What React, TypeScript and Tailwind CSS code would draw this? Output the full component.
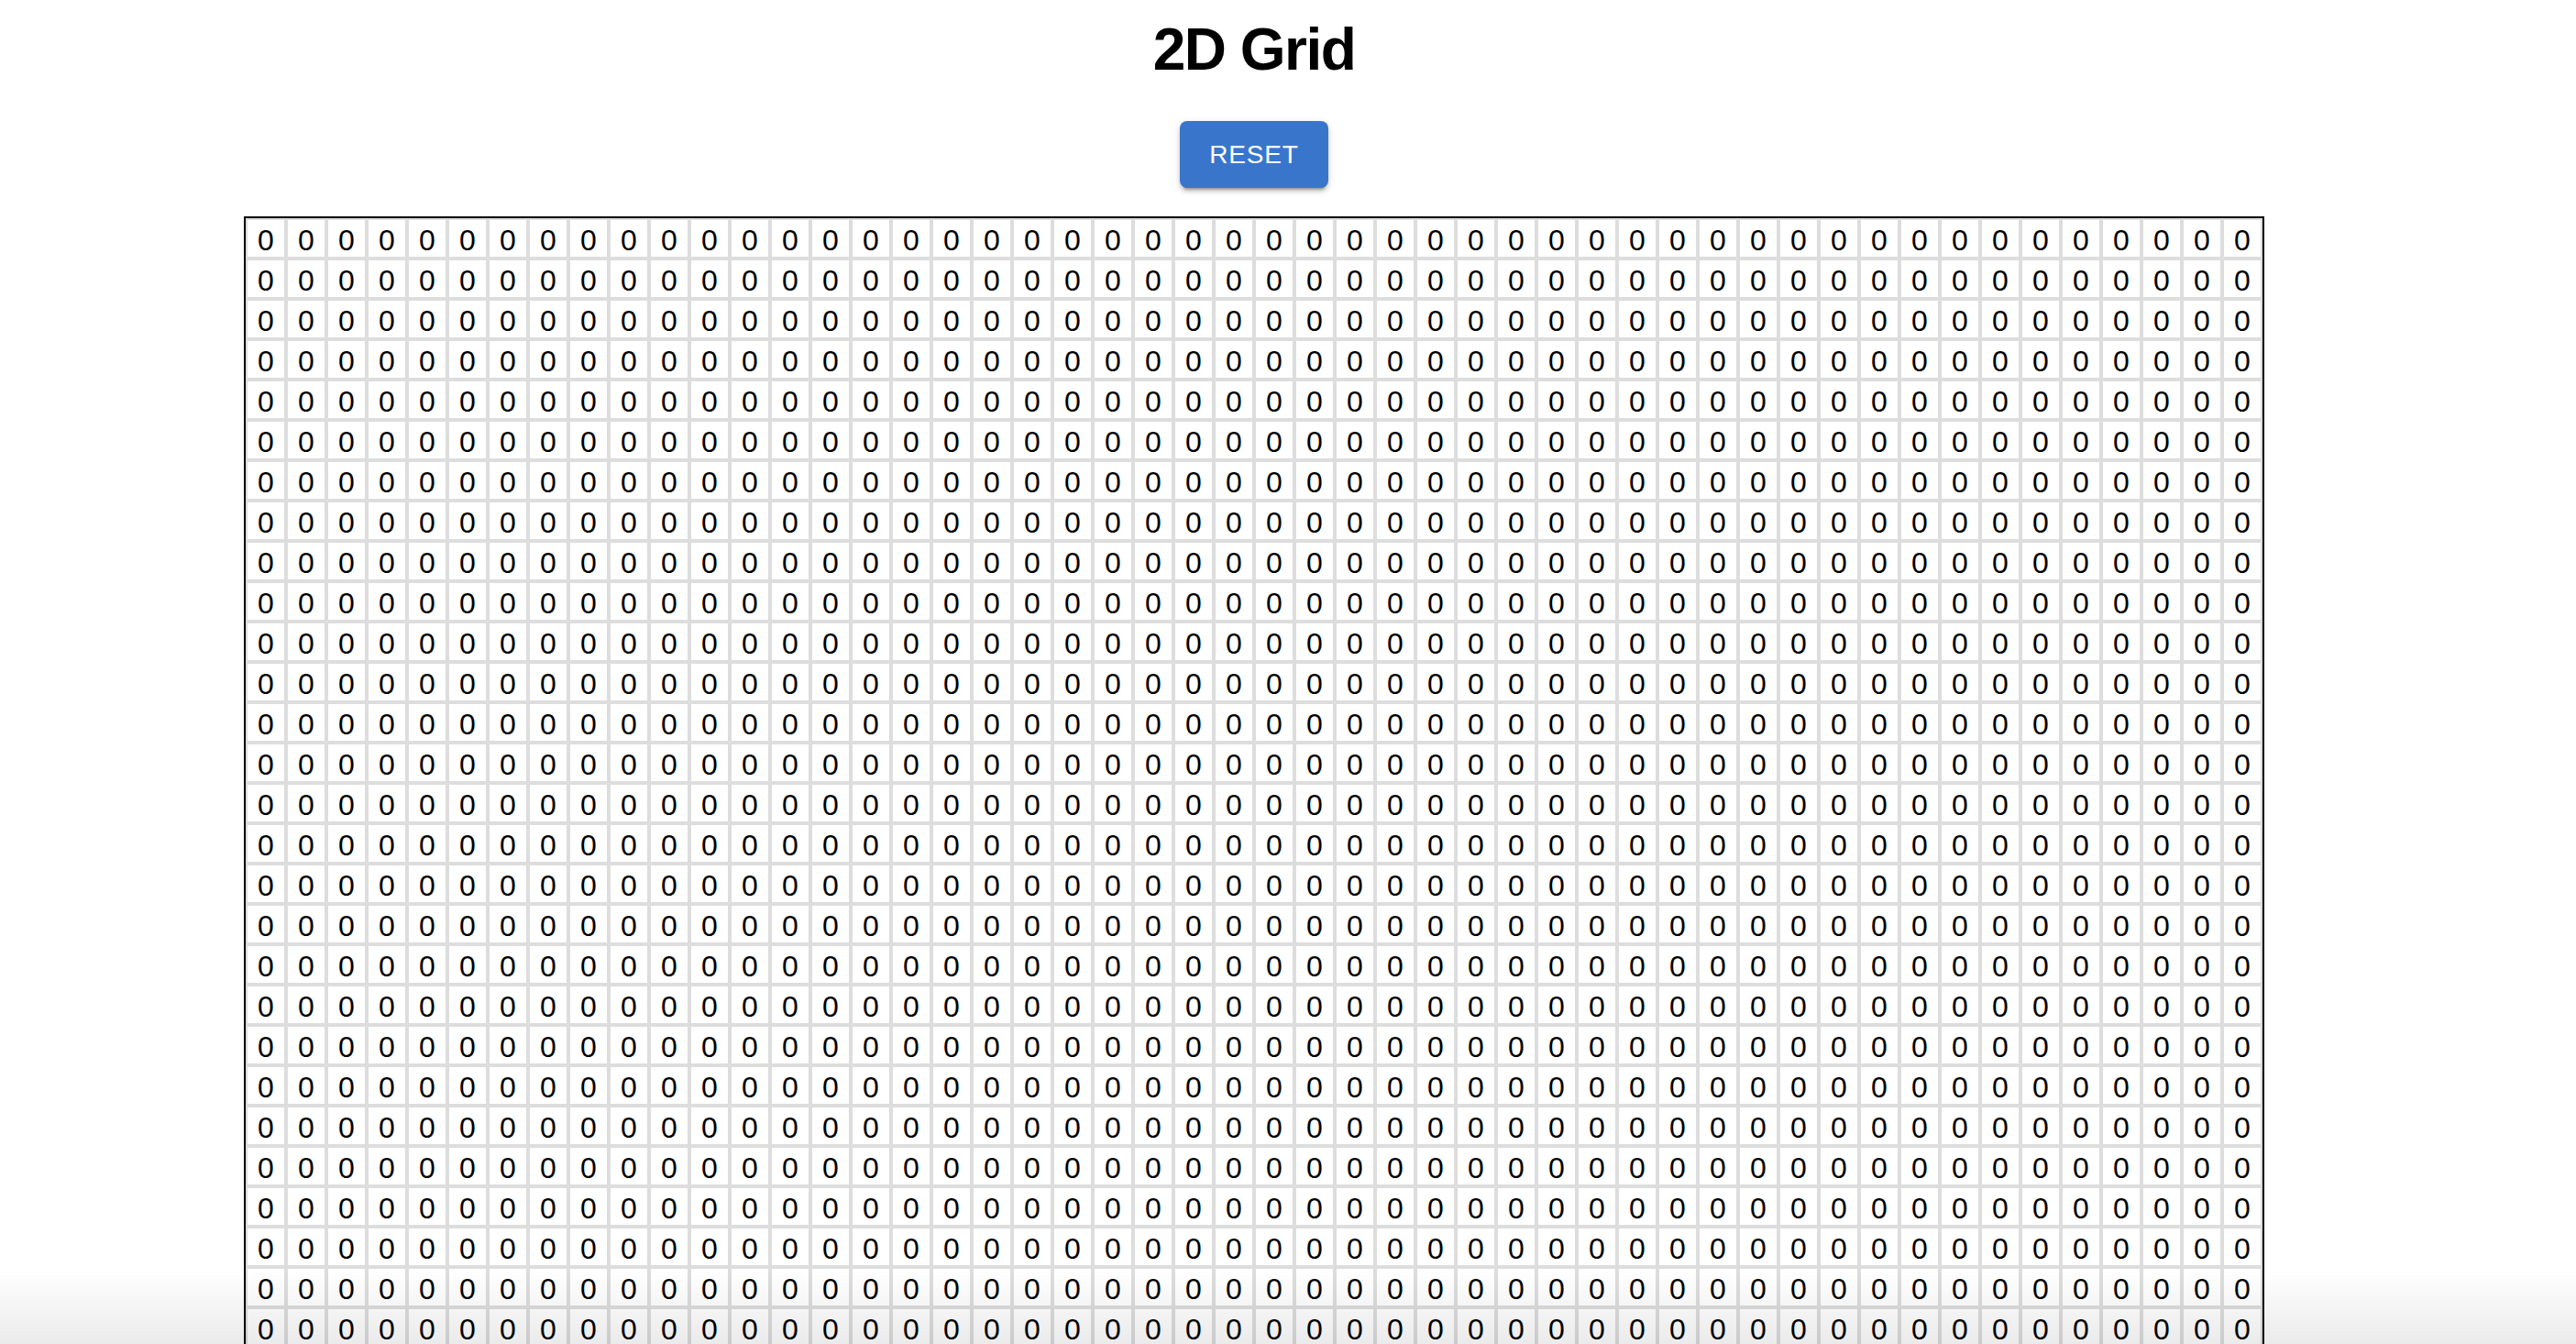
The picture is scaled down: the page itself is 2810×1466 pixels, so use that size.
const SIZE = 50

function makeGrid(): number[][] {
  return Array.from({ length: SIZE }, () => Array.from({ length: SIZE }, () => 0))
}

export default function App() {
  const grid = makeGrid()

  return (
    <main className="relative min-h-screen bg-white font-['Liberation_Sans',Arial,sans-serif] text-black">
      <div className="flex w-[2736px] flex-col items-center">
        <h1 className="mt-[17px] text-[64px] font-bold leading-[74px] tracking-[-1.5px]">2D Grid</h1>

        <button
          type="button"
          className="mt-[41px] flex h-[73px] w-[162px] items-center justify-center rounded-[8px] bg-[#3a75cc] text-[28px] uppercase tracking-[0.8px] text-white shadow-[0_6px_2px_-4px_rgba(0,0,0,0.2),0_4px_4px_0_rgba(0,0,0,0.14),0_2px_10px_0_rgba(0,0,0,0.12)]"
        >
          Reset
        </button>

        <div className="mt-[31px] grid grid-cols-[repeat(50,44px)] border-2 border-black">
          {grid.map((row, r) =>
            row.map((value, c) => (
              <div
                key={`${r}-${c}`}
                className="flex h-[44px] w-[44px] items-center justify-center border-2 border-[#dddddd] pt-[3px] text-[32px] leading-none"
              >
                {value}
              </div>
            )),
          )}
        </div>
      </div>

      {/* browser bottom fade */}
      <div className="pointer-events-none fixed inset-x-0 bottom-0 h-[80px] bg-gradient-to-b from-transparent to-black/[0.08]" />
    </main>
  )
}
